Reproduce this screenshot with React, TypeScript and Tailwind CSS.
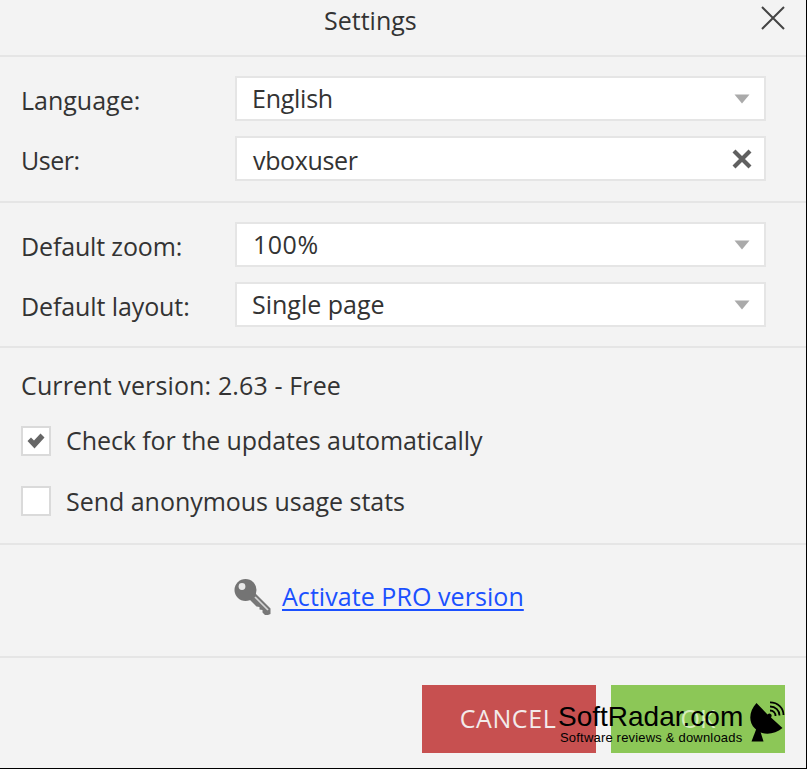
import React from 'react';

interface FieldRowProps {
  label: string;
  value: string;
  /** Tracking and alignment of the label */
  labelClass?: string;
  /** Tracking and alignment of the value */
  valueClass?: string;
  clearable?: boolean;
}

function CaretIcon(): React.ReactElement {
  return (
    <svg width="16" height="10" viewBox="0 0 16 10" fill="#aaaaaa">
      <path d="M0.5 0.5H15.5L8 9.5Z" />
    </svg>
  );
}

function ClearIcon(): React.ReactElement {
  return (
    <svg width="20" height="20" viewBox="0 0 20 20" stroke="#606060" strokeWidth="4.2">
      <path d="M2 2L18 18M18 2L2 18" />
    </svg>
  );
}

function KeyIcon(): React.ReactElement {
  return (
    <svg width="38" height="38" viewBox="0 0 38 38">
      <path d="M20 14L36.5 30.5V36L34 37H31L28.500 34.500V32L25.500 31.500V29L22.500 28.500L14 20Z" fill="#777777" />
      <path d="M21 19L34 32" stroke="#d5d5d5" strokeWidth="1.7" />
      <circle cx="11.5" cy="12" r="11" fill="#747474" />
      <circle cx="8" cy="8.5" r="3.4" fill="#e8e8e8" />
    </svg>
  );
}

function DishIcon(): React.ReactElement {
  return (
    <svg width="35" height="42" viewBox="0 0 35 42">
      <path d="M6.500 2C-1 10-2 21 5 27.500C12 35 24 34 32.500 27L21 16.500C23 14 20 11 17.500 13.500Z" />
      <path d="M7 26L1.500 40.500H13.500L10 29Z" />
      <g fill="none" stroke="#000000" strokeWidth="1.8">
        <path d="M20 9.500C23.500 9.500 25.500 12 25.500 15" />
        <path d="M20 5.500C25.500 5.500 29.500 9.500 29.500 14.500" />
        <path d="M20 1.300C28 1.300 33.500 7 33.500 14" />
      </g>
    </svg>
  );
}

function FieldRow({
  label,
  value,
  labelClass = '',
  valueClass = '',
  clearable = false,
}: FieldRowProps): React.ReactElement {
  return (
    <div className="flex h-[45px] items-center">
      <div className="w-[214px] pt-[2px]">
        <span className={labelClass}>{label}</span>
      </div>
      <div className="flex h-full w-[531px] items-center justify-between border-2 border-[#e5e5e5] bg-white pr-3 pl-[15px]">
        <span className={valueClass}>{value}</span>
        <span className="flex w-5 justify-center">{clearable ? <ClearIcon /> : <CaretIcon />}</span>
      </div>
    </div>
  );
}

function CheckRow({
  label,
  labelClass,
  checked = false,
}: {
  label: string;
  labelClass: string;
  checked?: boolean;
}): React.ReactElement {
  return (
    <div className="flex h-[30px] items-center gap-[15px]">
      <div className="flex size-[30px] items-center justify-center border-2 border-[#dadada] bg-white">
        {checked && (
          <svg width="18" height="16" viewBox="0 0 18 16" fill="#666666">
            <path d="M0.500 8L4 4.500L7 7.500L13.500 0.500L17.500 4.500L7.500 15.500Z" />
          </svg>
        )}
      </div>
      <span className={labelClass}>{label}</span>
    </div>
  );
}

export default function App(): React.ReactElement {
  return (
    <div className="relative flex h-[769px] w-[807px] flex-col overflow-hidden border-r border-b border-black bg-[#f3f3f3] font-['Open_Sans','Noto_Sans',sans-serif] text-[25px] leading-[34px] whitespace-nowrap text-[#333333]">
      {/* Title bar */}
      <header className="flex h-[57px] shrink-0 justify-between border-b-2 border-[#e5e5e5] pr-[21px] pl-[324px]">
        <h1 className="pt-[3px]">Settings</h1>
        <svg className="mt-[6px]" width="24" height="24" viewBox="0 0 24 24" stroke="#444444" strokeWidth="2">
          <path d="M1 1L23 23M23 1L1 23" />
        </svg>
      </header>

      <section className="flex h-[146px] shrink-0 flex-col gap-[15px] border-b-2 border-[#e5e5e5] pt-[19px] pl-[21px]">
        <FieldRow label="Language:" value="English" valueClass="mb-[2px] tracking-[-0.25px]" />
        <FieldRow
          label="User:"
          value="vboxuser"
          labelClass="tracking-[-0.5px]"
          valueClass="mt-[3px] pl-px tracking-[-0.35px]"
          clearable
        />
      </section>

      <section className="flex h-[145px] shrink-0 flex-col gap-[15px] border-b-2 border-[#e5e5e5] pt-[19px] pl-[21px]">
        <FieldRow
          label="Default zoom:"
          value="100%"
          labelClass="tracking-[-0.15px]"
          valueClass="mb-[2px] pl-px tracking-[0.5px]"
        />
        <FieldRow label="Default layout:" value="Single page" labelClass="tracking-[-0.1px]" valueClass="mb-px" />
      </section>

      <section className="flex h-[197px] shrink-0 flex-col border-b-2 border-[#e5e5e5] pt-5 pl-[21px]">
        <p className="tracking-[0.13px]">Current version: 2.63 - Free</p>
        <div className="mt-6 flex flex-col gap-[30px]">
          <CheckRow
            label="Check for the updates automatically"
            labelClass="mb-[2px] tracking-[-0.08px]"
            checked
          />
          <CheckRow label="Send anonymous usage stats" labelClass="tracking-[-0.03px]" />
        </div>
      </section>

      <section className="flex h-[113px] shrink-0 items-start gap-[10px] border-b-2 border-[#e5e5e5] pt-[33px] pl-[234px]">
        <KeyIcon />
        <a
          className="mt-px tracking-[0.06px] text-[#1a50ff] underline decoration-2 underline-offset-[3px]"
          href="#"
        >
          Activate PRO version
        </a>
      </section>

      <footer className="flex gap-[15px] pt-[27px] pl-[422px]">
        <button className="h-[68px] w-[174px] bg-[#c75050] pr-[2px] pb-[2px] tracking-[0.6px] text-[#f3eaea]">
          CANCEL
        </button>
        <button className="h-[68px] w-[174px] bg-[#8cc757] pb-[2px] text-[#d4edbc]">OK</button>
      </footer>

      {/* Branding laid over the buttons */}
      <div className="absolute top-[701px] left-[558px] flex font-['Liberation_Sans',Arial,sans-serif] text-black">
        <div className="w-[192px]">
          <div className="text-[28px] leading-[32px]">SoftRadar.com</div>
          <div className="pl-[2px] text-[13px] leading-[10px] tracking-[0.19px]">Software reviews &amp; downloads</div>
        </div>
        <DishIcon />
      </div>
    </div>
  );
}
